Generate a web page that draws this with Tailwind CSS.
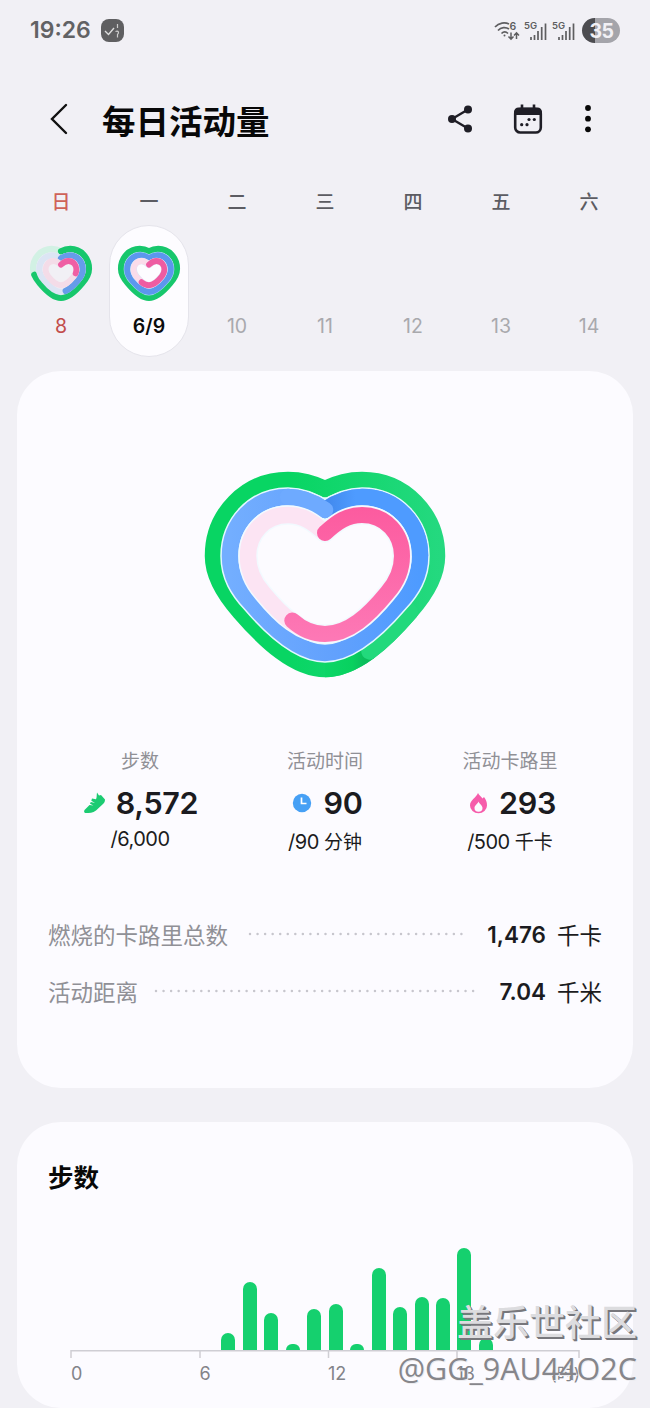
<!DOCTYPE html>
<html lang="zh-CN">
<head>
<meta charset="utf-8">
<title>每日活动量</title>
<script src="https://cdn.jsdelivr.net/npm/@tailwindcss/browser@4"></script>
</head>
<body class="bg-[#f1f0f5] font-['Inter','Noto_Sans_CJK_SC',sans-serif] text-[#1b1b20]">
<svg class="hidden">
  <defs>
    <path id="g" pathLength="100" d="M325 489C337 483 349 480 362 480C404 480 437 514 437 556C437 576 426 594 410 612C385 641 355 669 325 669C295 669 265 641 240 612C224 594 213 576 213 556C213 514 246 480 288 480C301 480 313 483 325 489"/>
    <path id="b" pathLength="100" d="M325 510C338 501 349 497 362 497C396 497 420 524 420 556C420 576 411 590 399 603C376 630 350 653 325 653C300 653 274 630 251 603C239 590 230 576 230 556C230 524 254 497 288 497C301 497 312 501 325 510"/>
    <path id="p" pathLength="100" d="M325 533C337 522 347 515 362 515C386 515 402 534 402 556C402 573 395 584 387 593C369 615 349 634 325 634C301 634 281 615 263 593C255 584 248 573 248 556C248 534 264 515 288 515C303 515 313 522 325 533"/>
  </defs>
</svg>
<div class="relative flex h-[1408px] w-[650px] flex-col overflow-hidden">
  <!-- status bar -->
  <div class="flex h-[60px] items-center justify-between pl-[30px] pr-[30px]">
    <div class="flex items-center gap-[10px]">
      <span class="text-[23px] font-semibold leading-[30px] text-[#626264]">19:26</span>
      <svg width="23" height="23" viewBox="0 0 23 23" fill="none"><rect width="23" height="23" rx="8" fill="#5f5f61"/><path d="M4 12l3.500 3.500L13 9" stroke="#ddd" stroke-width="1.400"/><path d="M16.500 5v4M14.500 12.500c3-1 4 1 2 3v3" stroke="#ccc" stroke-width="1.200"/></svg>
    </div>
    <div class="flex items-center">
      <svg width="88" height="24" viewBox="0 0 88 24" fill="none" stroke="#5e5e60" stroke-width="1.700">
        <path d="M1 9C5 4.500 11 4 15 6M4 12.500C7 9 12 9 15 11M7.500 15.500c2-2 4.500-2 6.500 0"/>
        <circle cx="10.500" cy="17.500" r="1" fill="#5e5e60" stroke="none"/>
        <path d="M17 14.500v6.500M14.500 18.500l2.500 2.700 2.500-2.700M22.500 21v-6M20 17.500l2.500-2.700 2.500 2.700" stroke-width="1.500"/>
        <g fill="#5e5e60" stroke="none"><text x="15.500" y="12" font-size="10.500" font-weight="600">6</text><text x="30" y="11" font-size="9.500" font-weight="600">5G</text><text x="58" y="11" font-size="9.500" font-weight="600">5G</text></g>
        <path d="M37 19v3M40.500 17v5M44 13v9M47.700 9v13M51.500 5.500v16.500M65 19v3M68.500 17v5M72 13v9M75.700 9v13M79.500 5.500v16.500"/>
      </svg>
      <div class="flex h-[25px] w-[38px] items-center justify-center rounded-full bg-linear-to-r from-[#4c4c50] from-35% to-[#a4a4aa] to-35% pl-px pt-px text-[19.500px] font-bold leading-[24px] tracking-tight text-[#f1f0f5]">35</div>
    </div>
  </div>
  <!-- title bar -->
  <header class="flex h-[120px] items-center pl-[49px] pr-[58px]">
    <svg class="mb-[2px]" width="20" height="32" viewBox="0 0 20 32" fill="none" stroke="#111" stroke-width="2.400" stroke-linecap="round"><path d="M17 2L3 16l14 14"/></svg>
    <h1 class="ml-[33px] flex-1 pt-[3px] text-[33.500px] font-bold leading-[48px] text-[#080808]">每日活动量</h1>
    <svg class="mb-[2px] mr-[39px]" width="28" height="30" viewBox="0 0 28 30" fill="#1f1e26"><path d="M22 5.500L6 15l16 9.500" fill="none" stroke="#1f1e26" stroke-width="2.400"/><circle cx="22" cy="5.500" r="4"/><circle cx="6" cy="15" r="4"/><circle cx="22" cy="24.500" r="4"/></svg>
    <svg class="mb-[2px] mr-[41px]" width="30" height="32" viewBox="0 0 30 32" fill="none"><rect x="2.200" y="6" width="25.600" height="23.500" rx="5" stroke="#1f1e26" stroke-width="2.600"/><path d="M1 12V9a4.500 4.500 0 0 1 4.500-4.500h19A4.500 4.500 0 0 1 29 9v3z" fill="#1f1e26"/><path d="M9 1.500v4M21 1.500v4" stroke="#1f1e26" stroke-width="2.600"/><g fill="#1f1e26"><circle cx="16" cy="16.500" r="1.600"/><circle cx="21.300" cy="16.500" r="1.600"/><circle cx="8.700" cy="21.700" r="1.600"/><circle cx="14" cy="21.700" r="1.600"/></g></svg>
    <svg class="mb-[2px]" width="8" height="30" viewBox="0 0 8 30" fill="#080808"><circle cx="4" cy="4" r="2.900"/><circle cx="4" cy="14.700" r="2.900"/><circle cx="4" cy="25.300" r="2.900"/></svg>
  </header>
  <!-- week strip -->
  <section class="flex h-[191px] flex-col px-[17px]">
    <div class="grid h-[45px] grid-cols-7 pt-[2px] text-center text-[19px] font-medium leading-[42px] text-[#5c5c62]"><span class="text-[#cf6259]">日</span><span>一</span><span>二</span><span>三</span><span>四</span><span>五</span><span>六</span></div>
    <div class="grid h-[132px] grid-cols-7 text-center text-[19.500px] leading-[24px] text-[#a9a9ad]">
      <div class="flex flex-col items-center pt-[20px] text-[#c24d4b]">
        <svg width="64" height="57" viewBox="0 0 64 57" fill="none" stroke-linecap="round">
          <g transform="translate(32,4) scale(.25,.259) translate(-325,-480)" stroke-width="24.500"><use href="#g" stroke="#d2f1e4"/><use href="#g" stroke="#17c76c" stroke-dasharray="72 100"/></g>
          <g transform="translate(32,10.300) scale(.229,.235) translate(-325,-497)" stroke-width="27"><use href="#b" stroke="#dce5f4"/><use href="#b" stroke="#659cea" stroke-dasharray="46 100"/></g>
          <g transform="translate(32,16) scale(.2,.204) translate(-325,-515)" stroke-width="29"><use href="#p" stroke="#f4dce8"/><use href="#p" stroke="#ef5fa4" stroke-dasharray="28 100"/></g>
        </svg>
        <span class="mt-[12px]">8</span>
      </div>
      <div class="mx-auto flex w-[80px] flex-col items-center rounded-full border border-[#e5e4eb] bg-[#fdfcff] pt-[19px] font-semibold text-[#0c0c0c]">
        <svg width="64" height="57" viewBox="0 0 64 57" fill="none" stroke-linecap="round">
          <g transform="translate(32,4) scale(.25,.259) translate(-325,-480)" stroke-width="24.500"><use href="#g" stroke="#17c76c"/></g>
          <g transform="translate(32,10.300) scale(.229,.235) translate(-325,-497)"><use href="#b" stroke="#a8dcf2" stroke-width="31"/><use href="#b" stroke="#5b97ee" stroke-width="26.500"/></g>
          <g transform="translate(32,16) scale(.2,.204) translate(-325,-515)"><use href="#p" stroke="#d9e8fa" stroke-width="33"/><use href="#p" stroke="#fadcea" stroke-width="28.500"/><use href="#p" stroke="#ee5ca2" stroke-width="28.500" stroke-dasharray="59 100"/></g>
        </svg>
        <span class="mt-[12px]">6/9</span>
      </div>
      <span class="pt-[89px]">10</span><span class="pt-[89px]">11</span><span class="pt-[89px]">12</span><span class="pt-[89px]">13</span><span class="pt-[89px]">14</span>
    </div>
  </section>
  <!-- daily summary -->
  <main class="mx-[17px] flex h-[717px] flex-col rounded-[44px] bg-[#fcfbff] px-[31px]">
    <svg class="mx-auto mt-[89px]" width="260" height="230" viewBox="195 460 260 230" fill="none" stroke-linecap="round">
      <defs>
        <linearGradient id="gr" gradientUnits="userSpaceOnUse" x1="205" y1="0" x2="445" y2="0"><stop offset=".35" stop-color="#08d563"/><stop offset="1" stop-color="#25d980"/></linearGradient>
        <linearGradient id="gd" gradientUnits="userSpaceOnUse" x1="325" y1="0" x2="364" y2="0"><stop stop-color="#0cd667"/><stop offset=".7" stop-color="#08d15f"/><stop offset="1" stop-color="#0bbd5c"/></linearGradient>
        <linearGradient id="pk" gradientUnits="userSpaceOnUse" x1="0" y1="507" x2="0" y2="643"><stop stop-color="#fc5b9f"/><stop offset="1" stop-color="#fd79b6"/></linearGradient>
        <linearGradient id="bl" gradientUnits="userSpaceOnUse" x1="230" y1="0" x2="420" y2="0"><stop stop-color="#73aeff"/><stop offset=".55" stop-color="#62a1fd"/><stop offset="1" stop-color="#4e9bff"/></linearGradient>
        <linearGradient id="bd" gradientUnits="userSpaceOnUse" x1="330" y1="0" x2="355" y2="0"><stop stop-color="#438bef"/><stop offset="1" stop-color="#4e9bff"/></linearGradient>
      </defs>
      <use href="#g" stroke="url(#gr)" stroke-width="16.500"/>
      <path d="M369.400 651.400C355 662 340 669 325 669" stroke="url(#gd)" stroke-width="16.500" stroke-linecap="butt"/>
      <path d="M410 612C397.500 626.500 383.750 640.750 369.400 651.400" stroke="#22d97c" stroke-width="16.500"/>
      <use href="#b" stroke="#e2f8ff" stroke-width="19.500"/>
      <use href="#b" stroke="url(#bl)" stroke-width="16.500"/>
      <path d="M325 510C338 501 349 497 362 497C396 497 420 524 420 556" stroke="url(#bd)" stroke-width="16.500" stroke-linecap="butt"/>
      <path d="M288 497C301 497 312 501 325 510" stroke="#6eaaff" stroke-width="16.500"/>
      <use href="#p" stroke="#f2faff" stroke-width="19.500"/>
      <use href="#p" stroke="#fce4f3" stroke-width="16.500"/>
      <path d="M325 533C337 522 347 515 362 515C386 515 402 534 402 556C402 573 395 584 387 593C369 615 349 634 325 634C313 634 302 629.250 292.300 620.500" stroke="url(#pk)" stroke-width="16"/>
    </svg>
    <div class="mt-[57px] flex text-center">
      <div class="flex w-[184px] flex-col items-center">
        <span class="text-[19px] leading-[30px] text-[#909096]">步数</span>
        <div class="mt-[8px] flex h-[36px] items-center gap-[11px] pl-[1px]">
          <svg width="22" height="22" viewBox="0 0 22 22" fill="#1ccb72"><path d="M14 .5l2 3 2-.5 4 4.500c0 2-.5 3-2 4.500l-7 6.500c-3 2.500-7 2.500-10 2.500-2 0-2.500-2-1-3.500L6.500 13l4 .5-3.500-1.800.8-1.700 4.200 1-3.700-2.300.7-2.200 4 .8c1-1.800.5-4 1-6.800z"/></svg>
          <span class="text-[30.500px] font-semibold leading-[36px] tracking-[-0.3px]">8,572</span>
        </div>
        <span class="mt-[4px] text-[20px] leading-[28px] tracking-tight">/6,000</span>
      </div>
      <div class="flex w-[186px] flex-col items-center">
        <span class="text-[19px] leading-[30px] text-[#909096]">活动时间</span>
        <div class="mt-[8px] flex h-[36px] items-center gap-[11px] pl-[5px]">
          <svg width="20" height="20" viewBox="0 0 20 20"><circle cx="10" cy="10" r="9.200" fill="#46a0f5"/><path d="M9.500 4.500v6h5" fill="none" stroke="#fff" stroke-width="1.700"/></svg>
          <span class="text-[30.500px] font-semibold leading-[36px] tracking-[-0.3px]">90</span>
        </div>
        <span class="mt-[7px] text-[20px] leading-[28px] tracking-tight">/90 <span class="text-[19px] tracking-normal">分钟</span></span>
      </div>
      <div class="flex w-[184px] flex-col items-center">
        <span class="text-[19px] leading-[30px] text-[#909096]">活动卡路里</span>
        <div class="mt-[8px] flex h-[36px] items-center gap-[11px] pl-[5px]">
          <svg width="19" height="22" viewBox="0 0 19 22"><path d="M9 1c1 2 3 3.500 4.500 5.500L15 5c2 2.500 3 5 3 8.500a8.500 7.800 0 0 1-17 0C1 8 7 6 9 1z" fill="#f65cab"/><path d="M9.500 9.500c.5 2 4 4 4 6.500a4 3.800 0 0 1-8 0c0-2.500 3-4 4-6.500z" fill="#fcfbff"/></svg>
          <span class="text-[30.500px] font-semibold leading-[36px] tracking-[-0.3px]">293</span>
        </div>
        <span class="mt-[7px] text-[20px] leading-[28px] tracking-tight">/500 <span class="text-[19px] tracking-normal">千卡</span></span>
      </div>
    </div>
    <div class="mt-[62px] flex h-[32px] items-center text-[22.500px]">
      <span class="w-[200px] pt-[2px] text-[#909096]">燃烧的卡路里总数</span>
      <svg class="mb-[2px]" width="220" height="4"><path d="M2 2H218" stroke="#c7c6cd" stroke-width="2.500" stroke-linecap="round" stroke-dasharray="0 7.550"/></svg>
      <span class="ml-auto mr-[11px] font-semibold">1,476</span><span class="pt-[2px]">千卡</span>
    </div>
    <div class="mt-[25px] flex h-[32px] items-center text-[22.500px]">
      <span class="w-[106px] pt-[2px] text-[#909096]">活动距离</span>
      <svg class="mb-[2px]" width="326" height="4"><path d="M2 2H323" stroke="#c7c6cd" stroke-width="2.500" stroke-linecap="round" stroke-dasharray="0 7.550"/></svg>
      <span class="ml-auto mr-[11px] font-semibold">7.04</span><span class="pt-[2px]">千米</span>
    </div>
  </main>
  <!-- hourly steps -->
  <section class="mx-[17px] mt-[34px] flex h-[286px] flex-col rounded-[44px] bg-[#fcfbff]">
    <h2 class="ml-[31px] mt-[37px] text-[25.500px] font-bold leading-[38px] text-[#080808]">步数</h2>
    <div class="ml-[54px] mt-[51px] flex h-[102px] w-[508px] items-end justify-between *:w-[14px] *:rounded-t-full *:bg-[#15d06e]">
      <i></i><i></i><i></i><i></i><i></i><i></i><i></i>
      <i style="height:17px"></i><i style="height:68px"></i><i style="height:37px"></i><i style="height:6px"></i><i style="height:41px"></i><i style="height:46px"></i><i style="height:6px"></i><i style="height:82px"></i><i style="height:43px"></i><i style="height:53px"></i><i style="height:52px"></i><i style="height:102px"></i><i style="height:12px"></i>
      <i></i><i></i><i></i><i></i>
    </div>
    <svg class="ml-[53px]" width="512" height="8" fill="none" stroke="#cfced4" stroke-width="1.500"><path d="M1 8V.75H509V8M130 0V8M258.500 0V8M387 0V8"/></svg>
    <div class="ml-[54px] mt-[4px] flex w-[509px] text-[18px] leading-[24px] text-[#838389]"><span class="w-[128.500px]">0</span><span class="w-[128.500px]">6</span><span class="w-[128.500px]">12</span><span class="flex-1">18</span><span class="text-[17px]">(时)</span></div>
  </section>
  <!-- community watermark -->
  <div class="absolute right-[13px] top-[1300px] flex flex-col items-end whitespace-nowrap">
    <div class="text-[36px] font-medium leading-[46px] text-[#dcdcdf] [text-shadow:1px_1px_0_#77777c,2px_2px_0_#77777c]">盖乐世社区</div>
    <div class="font-['Open_Sans','Noto_Sans'] text-[30.500px] font-normal leading-[44px] text-[#86868b] [text-shadow:1px_1px_0_#ececf0]">@GG_9AU44O2C</div>
  </div>
</div>
</body>
</html>
